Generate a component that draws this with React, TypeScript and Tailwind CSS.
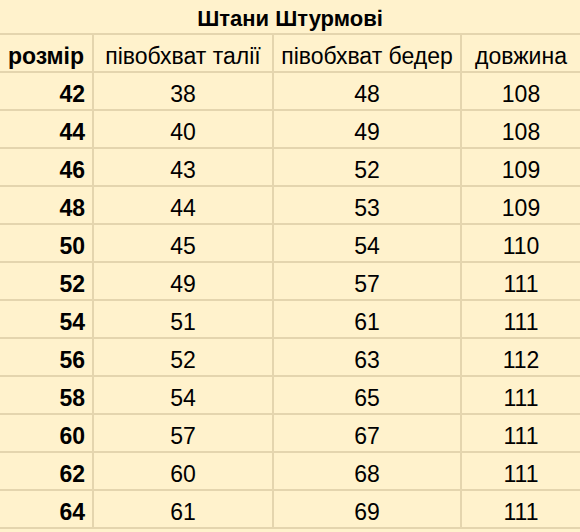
const rows: [number, number, number, number][] = [
  [42, 38, 48, 108],
  [44, 40, 49, 108],
  [46, 43, 52, 109],
  [48, 44, 53, 109],
  [50, 45, 54, 110],
  [52, 49, 57, 111],
  [54, 51, 61, 111],
  [56, 52, 63, 112],
  [58, 54, 65, 111],
  [60, 57, 67, 111],
  [62, 60, 68, 111],
  [64, 61, 69, 111],
];

const cell = 'h-[38px] flex items-end pb-[2px] leading-[25px] border-b-2 border-[#e4d5ae]';

export default function App() {
  return (
    <div className="w-[580px] h-[532px] overflow-hidden bg-[#fff2cc] text-black text-[23px] font-['Liberation_Sans',Arial,sans-serif]">
      <div className="h-[35px] flex items-end justify-center pb-[2px] leading-[25px] text-[22px] font-bold border-b-2 border-[#e4d5ae]">
        Штани Штурмові
      </div>
      <div className="grid grid-cols-[94px_180px_188px_1fr]">
        <div className={`${cell} justify-end pr-[8px] font-bold border-r-2`}>розмір</div>
        <div className={`${cell} justify-center border-r-2 whitespace-nowrap`}>півобхват талії</div>
        <div className={`${cell} justify-center border-r-2 whitespace-nowrap`}>півобхват бедер</div>
        <div className={`${cell} justify-center`}>довжина</div>
        {rows.map(([size, waist, hips, length]) => (
          <div key={size} className="contents">
            <div className={`${cell} justify-end pr-[7px] font-bold border-r-2`}>{size}</div>
            <div className={`${cell} justify-center border-r-2`}>{waist}</div>
            <div className={`${cell} justify-center border-r-2`}>{hips}</div>
            <div className={`${cell} justify-center`}>{length}</div>
          </div>
        ))}
      </div>
    </div>
  );
}
